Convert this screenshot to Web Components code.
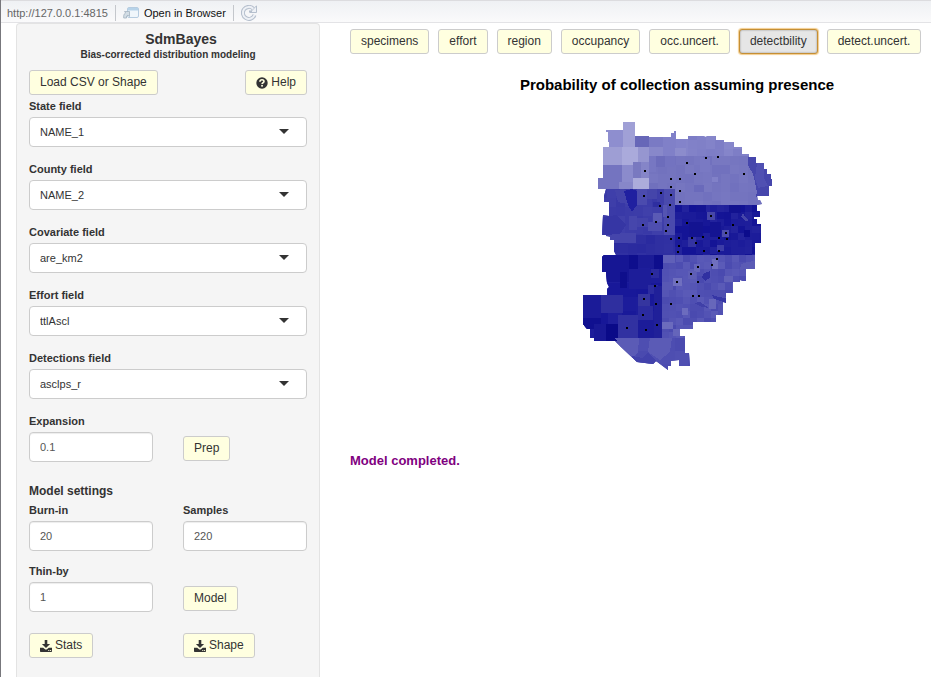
<!DOCTYPE html>
<html lang="en">
<head>
<meta charset="utf-8">
<title>SdmBayes</title>
<style>
  body { margin: 0; font-family: "Liberation Sans", Arial, sans-serif; font-size: 12px; color: #333; background: #fff; }
</style>
</head>
<body>
<sdm-app></sdm-app>
<script>
const define = (name, html, setup) => customElements.define(name, class extends HTMLElement {
  connectedCallback() {
    if (this.shadowRoot) return;
    const root = this.attachShadow({ mode: 'open' });
    root.innerHTML = '<style>*{box-sizing:border-box}</style>' + html;
    if (setup) setup(this, root);
  }
});

/* Button with an optional icon slot */
define('sdm-button', `
<style>
  :host { display: inline-block; }
  button { display: flex; align-items: center; gap: 3px; height: 25px; padding: 0 10px; border: 1px solid #ccc; border-radius: 3px;
    background: #ffffe0; color: #333; font: 12px/17px "Liberation Sans", Arial, sans-serif; white-space: nowrap; cursor: pointer; }
  :host([active]) button { background: #e6e6e6; border-color: #c58f35; box-shadow: inset 0 0 2px #888, 0 0 1px 1px #f3cd8d; }
</style>
<button type="button"><slot name="icon"></slot><span><slot></slot></span></button>`,
(host, root) => { if (host.hasAttribute('active')) root.querySelector('button').setAttribute('aria-pressed', 'true'); });

const fieldStyle = `
  :host { display: block; }
  label { display: block; margin-bottom: 3px; font-size: 11px; line-height: 16px; font-weight: bold; }
  select, input { display: block; width: 100%; height: 30px; padding: 0 10px; border: 1px solid #ccc; border-radius: 4px; background: #fff;
    font: 11px "Liberation Sans", Arial, sans-serif; }`;

define('sdm-select', `
<style>${fieldStyle}
  .box { position: relative; }
  select { appearance: none; color: #333; }
  svg { position: absolute; right: 18px; top: 12px; width: 10px; height: 5px; pointer-events: none; }
</style>
<label for="f"></label>
<div class="box"><select id="f"><option></option></select>
<svg viewBox="0 0 10 5" aria-hidden="true"><path d="M0 0h10L5 5z" fill="#333"/></svg></div>`,
(host, root) => {
  root.querySelector('label').textContent = host.getAttribute('label');
  root.querySelector('option').textContent = host.getAttribute('value');
});

define('sdm-input', `
<style>${fieldStyle}
  input { color: #555; box-shadow: inset 0 1px 1px rgba(0,0,0,.075); }
</style>
<label for="f"></label><input id="f" type="text" inputmode="decimal">`,
(host, root) => {
  root.querySelector('label').textContent = host.getAttribute('label');
  root.querySelector('input').value = host.getAttribute('value');
});

define('sdm-icon', `
<style>:host { display: block; width: 12px; height: 12px; } svg { display: block; width: 100%; height: 100%; }</style>
<svg viewBox="0 0 12 12" aria-hidden="true"></svg>`,
(host, root) => {
  root.querySelector('svg').innerHTML = host.getAttribute('name') === 'help'
    ? '<circle cx="6" cy="6" r="5.7" fill="#333"/><path d="M3.9 4.800C4 3.200 4.900 2.700 6 2.700c1.200 0 2 .7 2 1.700 0 1.400-1.900 1.300-1.900 2.600" fill="none" stroke="#ffffe0" stroke-width="1.600"/><rect x="5.200" y="7.900" width="1.700" height="1.700" fill="#ffffe0"/>'
    : '<path fill="#333" d="M4.700 0h2.600v4h2.800L6 8 1.900 4h2.800zM0 7.700h3.200l1.500 1.400q1.300 1 2.600 0l1.500-1.400H12v3.600q0 .7-.7.700H.7q-.7 0-.7-.7z"/><path fill="#ffffe0" d="M8.300 10h1v1h-1zM10.100 10h1v1h-1z"/>';
});

/* Viewer toolbar */
define('viewer-bar', `
<style>
  :host { display: block; }
  header { display: flex; align-items: center; gap: 7px; height: 23px; padding: 3px 6px 0; background: linear-gradient(#dcdcdf 0 1px, #eff1f4 1px, #fafafb);
    border-bottom: 1px solid #e3e3e6; font: 11px/16px "Liberation Sans", Arial, sans-serif; white-space: nowrap; }
  .url { color: #666; }
  i { width: 1px; height: 16px; background: #c4c7cc; }
  button { display: flex; align-items: center; gap: 5px; padding: 0; border: 0; background: none; color: #111; font: inherit; cursor: pointer; }
  svg { display: block; }
</style>
<header>
  <span class="url">http://127.0.0.1:4815</span><i></i>
  <button type="button"><svg width="16" height="13" viewBox="0 0 16 13" aria-hidden="true">
    <rect x="4.500" y="1.500" width="11" height="10" rx="1.500" fill="#f0f6fb" stroke="#b6cce0"/><path d="M5 2h10v2.500H5z" fill="#b7d3e9"/>
    <path d="M.7 12V9.800q0-2 2-2.800L1.500 5.500h5v5L5 9.200 3.500 10v2z" fill="#d3dde5" stroke="#a3b2c0" stroke-width=".8"/></svg>Open in Browser</button><i></i>
  <button type="button" aria-label="Refresh"><svg width="16" height="16" viewBox="0 0 16 16" aria-hidden="true">
    <path d="M12.200 3.700A6 6 0 1 0 13.500 10" fill="none" stroke="#b5bfcd" stroke-width="4"/><path d="M9 7.500h6.500V.8z" fill="#eef1f6" stroke="#b5bfcd"/>
    <path d="M12.200 3.700A6 6 0 1 0 13.500 10" fill="none" stroke="#eef1f6" stroke-width="2"/><path d="M8 5.500h3v2H8z" fill="#b5bfcd"/></svg></button>
</header>`);

/* Settings panel */
define('sdm-panel', `
<style>
  :host { display: block; padding: 6px 12px 18px; background: #f5f5f5; border: 1px solid #e3e3e3; border-bottom: 0; border-radius: 4px 4px 0 0; }
  h1, h2, p { margin: 0; }
  h1 { padding-left: 26px; font-size: 14px; line-height: 18px; text-align: center; }
  p { font-size: 10px; line-height: 14px; font-weight: bold; text-align: center; }
  .top { display: flex; justify-content: space-between; margin: 8px 0 3px; }
  .fields { display: grid; gap: 14px; }
  .pair { display: grid; grid-template-columns: 1fr 1fr; column-gap: 30px; row-gap: 12px; align-items: end; }
  .act { padding-bottom: 1px; }
  .first { margin-top: 14px; }
  .last { margin-top: 21px; }
  h2 { font-size: 12px; line-height: 16px; margin: 21px 0 3px; }
  sdm-button { display: block; width: max-content; }
</style>
<h1>SdmBayes</h1>
<p>Bias-corrected distribution modeling</p>
<div class="top"><sdm-button>Load CSV or Shape</sdm-button><sdm-button><sdm-icon slot="icon" name="help"></sdm-icon>Help</sdm-button></div>
<div class="fields">
  <sdm-select label="State field" value="NAME_1"></sdm-select>
  <sdm-select label="County field" value="NAME_2"></sdm-select>
  <sdm-select label="Covariate field" value="are_km2"></sdm-select>
  <sdm-select label="Effort field" value="ttlAscl"></sdm-select>
  <sdm-select label="Detections field" value="asclps_r"></sdm-select>
</div>
<div class="pair first"><sdm-input label="Expansion" value="0.1"></sdm-input><div class="act"><sdm-button>Prep</sdm-button></div></div>
<h2>Model settings</h2>
<div class="pair">
  <sdm-input label="Burn-in" value="20"></sdm-input><sdm-input label="Samples" value="220"></sdm-input>
  <sdm-input label="Thin-by" value="1"></sdm-input><div class="act"><sdm-button>Model</sdm-button></div>
</div>
<div class="pair last">
  <sdm-button><sdm-icon slot="icon" name="download"></sdm-icon>Stats</sdm-button>
  <sdm-button><sdm-icon slot="icon" name="download"></sdm-icon>Shape</sdm-button>
</div>`);

/* County map: shaded cells clipped to the region outline, with record points */
const OUTLINE = '606,130 623,130 623,122 635,122 635,136 649,136 649,137 671,137 671,133 674,133 674,131 676,131 676,139 688,139 688,136 703,136 706,137 707,136 716,136 716,140 724,140 724,142 734,142 734,147 742,147 742,154 749,154 749,157 756,157 756,163 764,163 764,169 767,169 767,174 771,174 771,179 772,179 772,186 769,186 769,196 757,196 758,200 760,200 762,204 757,205 757,211 760,211 760,217 754,217 754,219 757,219 757,224 761,224 761,243 755,243 755,269 746,269 746,281 743,281 740,280 740,282 733,282 733,293 726,293 726,303 723,302 723,315 716,315 716,322 693,322 693,329 680,329 680,336 685,336 685,353 689,353 690,366 679,366 679,360 671,361 671,366 668,366 668,370 656,361 653,364 637,362 620,346 615,341 594,341 590,339 590,329 587,329 583,324 583,295 607,295 607,289 609,287 607,283 606,272 602,272 602,257 604,255 616,255 614,251 614,240 610,240 610,237 602,235 602,233 603,215 609,216 609,202 604,202 604,196 606,189 598,189 598,178 603,178 603,147 609,147 609,142 608,142 608,132 606,132';
const ZONES = [ /* x, y, w, h, rgb, cell size, variation */
  [598,122,176,34,[130,130,200],9,5],
  [649,156,125,49,[116,116,191],9,4],
  [598,189,77,46,[60,60,168],9,4],
  [610,235,65,20,[45,45,160],9,4],
  [675,205,90,50,[27,27,153],7,9],
  [580,255,82,83,[27,27,154],14,4],
  [662,255,110,83,[82,82,179],7,9],
  [610,338,90,34,[78,78,177],13,4]
];
const CELLS = [
  [606,130,17,17,'#8e8ecf'],[623,122,12,25,'#a0a0d6'],[635,136,14,11,'#6767b8'],[649,137,14,10,'#7a7ac4'],[663,131,13,25,'#8080c8'],[649,147,14,9,'#8888ca'],
  [676,139,10,9,'#8383ca'],[675,148,11,8,'#8c8ccc'],
  [603,147,19,18,'#9e9ed4'],[622,147,16,18,'#aaaadb'],[638,147,11,15,'#9696d0'],[603,165,19,24,'#7474c0'],[598,178,5,11,'#7474c0'],
  [622,165,11,17,'#8b8bcc'],[619,182,14,7,'#8787c9'],[633,162,8,16,'#7979c0'],[641,162,8,16,'#8585c8'],[633,178,16,11,'#acacdb'],
  [649,156,7,16,'#7777c2'],[656,156,9,11,'#6c6cbb'],[665,156,10,11,'#7373c0'],[712,177,6,5,'#8181c8'],[694,185,10,7,'#6a6abb'],[700,158,10,14,'#7979c3'],[670,189,5,16,'#6e6ebe'],
  [637,189,10,16,'#4b4bae'],[647,189,10,10,'#4545aa'],[657,189,7,14,'#3d3da8'],[664,189,11,46,'#4a4aad'],[653,202,7,5,'#2e2ea0'],
  [629,216,8,14,'#4646ac'],[637,218,11,9,'#4343aa'],[653,213,9,9,'#5a5ab5'],[648,222,14,9,'#4e4eb0'],[606,233,30,10,'#4545ab'],[663,205,4,12,'#5454b2'],
  [707,212,8,8,'#4747a8'],[722,230,7,7,'#4d4dad'],[688,237,8,10,'#3333a2'],[717,245,7,6,'#3c3ca7'],[744,230,6,7,'#0c0c8c'],[689,222,14,15,'#131391'],[710,222,11,15,'#141492'],[729,205,12,8,'#121290'],[696,205,10,7,'#141493'],
  [602,255,27,27,'#161694'],[629,255,9,14,'#0e0e8d'],[638,255,16,13,'#1b1b97'],[654,255,9,14,'#0e0e8d'],[629,269,22,20,'#1d1d99'],[620,272,7,16,'#0e0e8c'],[651,269,8,9,'#2a2a9f'],[648,285,10,9,'#2c2ca0'],
  [583,295,18,23,'#1b1b98'],[601,295,22,18,'#2f2f9f'],[638,294,12,12,'#35359f'],[638,306,15,14,'#2b2b9f'],[583,318,11,11,'#101090'],[583,318,18,10,'#101090'],[594,324,12,18,'#191996'],[606,324,12,17,'#0a0a88'],[618,315,20,23,'#3131a1'],[638,320,16,18,'#1c1c99'],[654,286,8,52,'#202099'],
  [663,255,12,8,'#6060b8'],[662,282,11,8,'#5858b4'],[673,278,9,8,'#6f6fbf'],[662,322,11,7,'#6b6bbd'],[673,329,7,7,'#6565ba'],[712,259,6,10,'#6f6fbf'],[694,264,6,8,'#6666bb'],[688,271,8,8,'#5e5eb6'],
  [724,276,9,6,'#6262b8'],[709,299,7,10,'#6767bb'],[682,308,6,7,'#6c6cbe']
];
const SHAPES = [
  ['748,157 757,157 757,163 765,163 765,169 768,169 768,174 773,174 773,197 756,197 757,192 755,182 753,174 748,165','#4646ac'],
  ['757,163 764,163 764,178 768,186 758,188 755,178','#5050b2'],
  ['615,190 624,189 632,205 618,202','#4343aa'],
  ['624,191 632,189 637,191 637,205 632,212 628,205','#2020a0'],
  ['603,217 616,215 626,225 620,234 603,235','#3636a4'],
  ['743,213 745,217 749,220 746,221 741,217','#4646a9'],
  ['703,274 710,271 710,278 705,281 702,278','#3030a1'],
  ['712,295 718,297 726,298 726,303 714,299','#3636a5'],
  ['694,303 700,302 709,308 702,307','#4040a8'],
  ['741,264 747,262 755,261 755,269 746,269 740,270','#5b5bb5'],
  ['615,338 639,338 638,352 630,362','#5b5bb6'],
  ['650,338 672,338 670,352 660,360 648,352','#5b5bb6'],
  ['632,356 642,358 648,353 658,362 653,365 635,365','#4242ab']
];
const POINTS = '645,171 671,179 671,187 644,196 661,193 671,195 660,206 670,205 668,217 656,222 643,225 668,225 666,231 671,239 680,179 687,163 706,158 718,157 695,174 744,174 680,191 680,202 711,216 687,223 733,225 726,233 679,238 692,238 703,237 719,238 727,239 679,246 696,243 678,252 704,251 719,251 717,259 712,265 698,267 691,274 677,282 698,282 693,296 699,296 671,304 652,274 655,286 644,299 656,304 643,315 627,328 646,330 657,325';

define('county-map', `
<style>:host { display: block; } svg { display: block; width: 200px; height: 252px; margin: 0 auto; }</style>
<svg viewBox="577 120 200 252" shape-rendering="crispEdges" role="img" aria-label="Map of collection probability by county"></svg>`,
(host, root) => {
  let seed = 11;
  const rand = () => (seed = (seed * 16807) % 2147483647) / 2147483647;
  const rect = (x, y, w, h, fill) => `<rect x="${x}" y="${y}" width="${w}" height="${h}" fill="${fill}"/>`;
  let out = `<clipPath id="c"><polygon points="${OUTLINE}"/></clipPath><g clip-path="url(#c)">`;
  for (const [x, y, w, h, rgb, size, vary] of ZONES) {
    out += rect(x, y, w, h, `rgb(${rgb})`);
    for (let cy = y; cy < y + h; cy += size)
      for (let cx = x; cx < x + w; cx += size) {
        const d = Math.round((rand() * 2 - 1) * vary);
        out += rect(cx, cy, Math.min(size, x + w - cx), Math.min(size, y + h - cy), `rgb(${rgb[0] + d},${rgb[1] + d},${rgb[2] + Math.round(d / 2)})`);
      }
  }
  for (const c of CELLS) out += rect(...c);
  for (const [p, f] of SHAPES) out += `<polygon points="${p}" fill="${f}"/>`;
  out += '</g>';
  for (const p of POINTS.split(' ')) { const [x, y] = p.split(','); out += rect(x - 1, y - 1, 2, 2, '#000'); }
  root.querySelector('svg').innerHTML = out;
});

define('sdm-results', `
<style>
  :host { display: block; padding-top: 6px; }
  nav { display: flex; flex-wrap: wrap; gap: 9px; }
  figure { margin: 21px 9px 0 82px; }
  figcaption { text-align: center; font-size: 15px; line-height: 20px; font-weight: bold; color: #000; }
  county-map { margin-top: 25px; }
  p { margin: 80px 0 0; font-size: 13px; line-height: 18px; font-weight: bold; color: #800080; }
</style>
<nav>
  <sdm-button>specimens</sdm-button><sdm-button>effort</sdm-button><sdm-button>region</sdm-button><sdm-button>occupancy</sdm-button>
  <sdm-button>occ.uncert.</sdm-button><sdm-button active>detectbility</sdm-button><sdm-button>detect.uncert.</sdm-button>
</nav>
<figure><figcaption>Probability of collection assuming presence</figcaption><county-map></county-map></figure>
<p role="status">Model completed.</p>`);

define('sdm-app', `
<style>
  :host { display: flex; flex-direction: column; min-height: 100vh; border-left: 1px solid #77777c; }
  main { flex: 1; display: grid; grid-template-columns: 304fr 581fr; column-gap: 30px; padding-left: 15px; }
</style>
<viewer-bar></viewer-bar>
<main><sdm-panel></sdm-panel><sdm-results></sdm-results></main>`);
</script>
</body>
</html>
